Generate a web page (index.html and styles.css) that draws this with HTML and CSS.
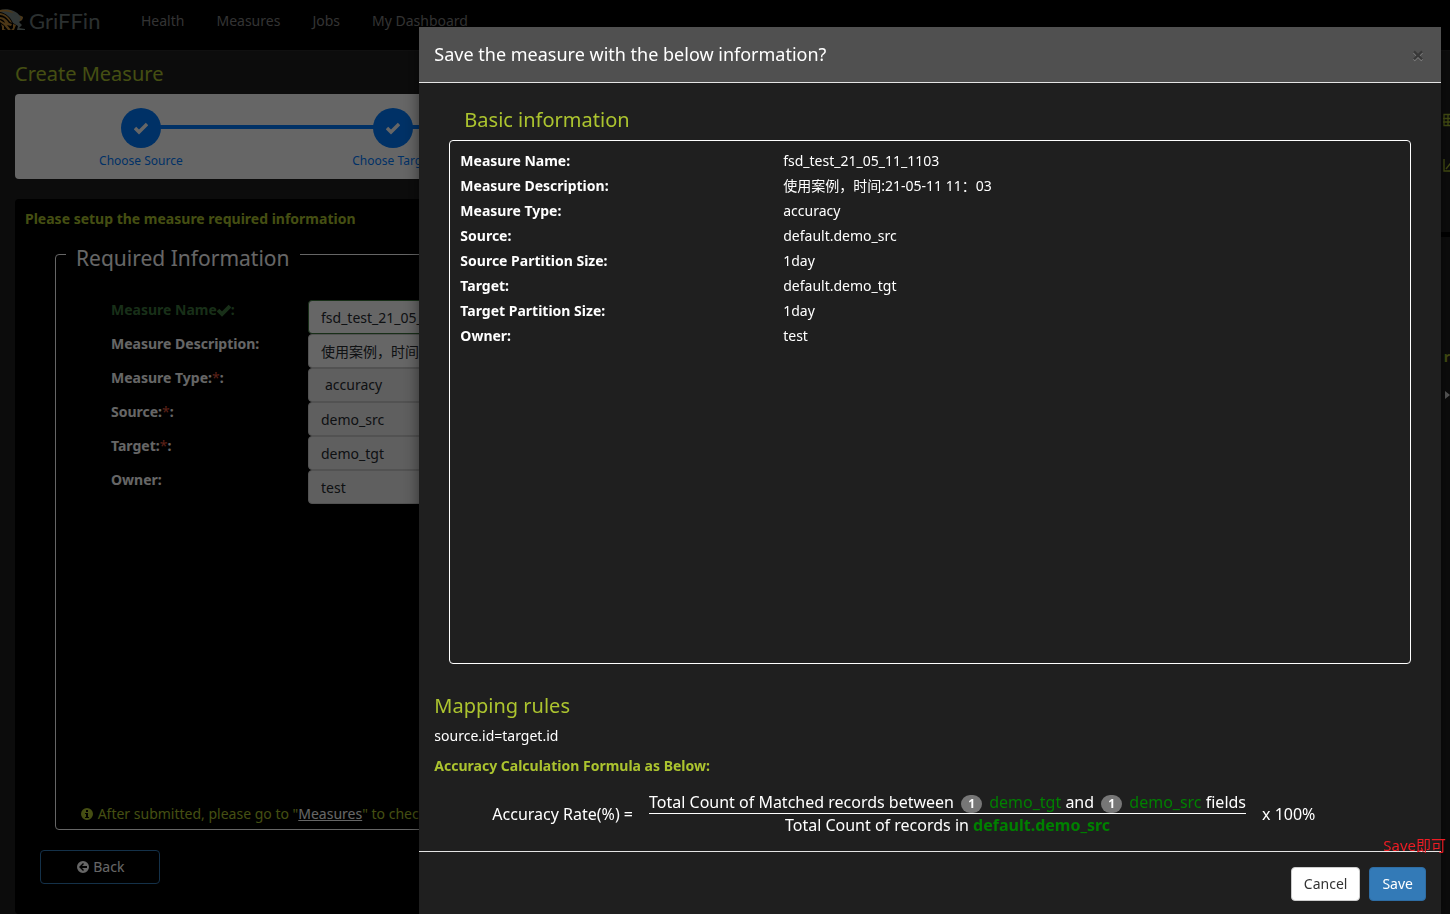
FILE: index.html
```html
<!DOCTYPE html>
<html lang="en">
<head>
<meta charset="utf-8">
<title>Griffin - Create Measure</title>
<link rel="stylesheet" href="styles.css">
</head>
<body>
<div class="page">
  <header class="navbar">
    <a class="brand" href="#">
      <svg class="brand-mark" viewBox="0 0 26 24" aria-hidden="true">
        <path d="M0 1 C7 -1 16 1 20 7 L23 8 L22 11 L19 13 L22 16 L19 19 L25 20 V21 H17 L18 17 L13 14 C11 9 6 4 0 3 Z" fill="#7c8988"/>
        <path d="M0 1 C6 0 11 1 14 4 C9 3 5 2 0 3 Z M0 4 C6 5 10 9 12 14 L10 13 C7 9 4 6 0 6 Z M0 8 C4 8 7 11 9 14 L12 15 L11 17 L7 16 L11 21 H8 L4 16 L0 13 V11 L5 14 C4 11 2 10 0 10 Z M1 15 L4 17 L4 20 L6 21 H2 L2 18 Z M13 15 L16 16 L14 21 H11 L13 19 Z M19 6 L23 8 L22 11 L19 12 L21 9 Z" fill="#c08a38"/>
      </svg>
      <span class="brand-name">GriFFin</span>
    </a>
    <nav class="nav">
      <a href="#">Health</a>
      <a href="#">Measures</a>
      <a href="#">Jobs</a>
      <a href="#">My Dashboard</a>
    </nav>
  </header>
  <div class="layout">
    <main class="main">
      <h1 class="page-title">Create Measure</h1>
      <ol class="steps">
        <li class="step">
          <span class="step-dot"><svg class="icon" viewBox="0 0 14 14"><path d="M1 7 L5 11 L13 3" fill="none" stroke="currentColor" stroke-width="3.400"/></svg></span>
          <span class="step-label">Choose Source</span>
        </li>
        <li class="step">
          <span class="step-dot"><svg class="icon" viewBox="0 0 14 14"><path d="M1 7 L5 11 L13 3" fill="none" stroke="currentColor" stroke-width="3.400"/></svg></span>
          <span class="step-label">Choose Target</span>
        </li>
      </ol>
      <form class="panel">
        <p class="panel-lead">Please setup the measure required information</p>
        <fieldset class="required">
          <legend>Required Information</legend>
          <div class="fields">
            <label class="valid" for="name">Measure Name<svg class="icon" viewBox="0 0 14 14"><path d="M1 7 L5 11 L13 3" fill="none" stroke="currentColor" stroke-width="3.800"/></svg>:</label>
            <input id="name" class="valid" type="text" value="fsd_test_21_05_11_1103">
            <label for="desc">Measure Description:</label>
            <input id="desc" type="text" value="使用案例，时间:21-05-11 11：03">
            <label for="type">Measure Type:<b class="star">*</b>:</label>
            <select id="type" disabled><option>accuracy</option></select>
            <label for="source">Source:<b class="star">*</b>:</label>
            <input id="source" type="text" value="demo_src" disabled>
            <label for="target">Target:<b class="star">*</b>:</label>
            <input id="target" type="text" value="demo_tgt" disabled>
            <label for="owner">Owner:</label>
            <input id="owner" type="text" value="test" disabled>
          </div>
          <p class="hint"><svg class="icon" viewBox="0 0 14 14"><path fill="currentColor" fill-rule="evenodd" d="M7 1a6 6 0 1 0 0 12A6 6 0 0 0 7 1ZM6 3h2v2H6ZM5 6h3v4h1v1H5v-1h1V7H5Z"/></svg> After submitted, please go to "<a href="#">Measures</a>" to check</p>
        </fieldset>
        <button class="back" type="button"><svg class="icon" viewBox="0 0 14 14"><path fill="currentColor" fill-rule="evenodd" d="M7 1a6 6 0 1 0 0 12A6 6 0 0 0 7 1ZM7 3l1 1-2 2h5v2H6l2 2-1 1-4-4Z"/></svg> Back</button>
      </form>
    </main>
    <aside class="side">
      <svg class="side-icon" viewBox="0 0 14 14"><path fill="none" stroke="currentColor" stroke-width="1.300" d="M1 1.500h12v11H1ZM0 5.500h14M0 9h14M5 1v12M9.500 1v12"/></svg>
      <svg class="side-icon chart" viewBox="0 0 14 14"><path fill="none" stroke="currentColor" stroke-width="1.400" d="M1 1v12h13M3 11l4-5 3 2 4-5"/></svg>
      <hr class="side-rule">
      <span class="side-text">r</span>
      <svg class="side-arrow" viewBox="0 0 8 10"><path d="M1 1v8l5-4Z"/></svg>
    </aside>
  </div>
</div>

<div class="overlay">
  <section class="modal" role="dialog" aria-labelledby="modal-title">
    <header class="modal-header">
      <h2 id="modal-title">Save the measure with the below information?</h2>
      <button class="close" type="button" aria-label="Close">×</button>
    </header>
    <div class="modal-body">
      <div class="basic">
        <h3>Basic information</h3>
        <dl class="info">
          <dt>Measure Name:</dt><dd>fsd_test_21_05_11_1103</dd>
          <dt>Measure Description:</dt><dd>使用案例，时间:21-05-11 11：03</dd>
          <dt>Measure Type:</dt><dd>accuracy</dd>
          <dt>Source:</dt><dd>default.demo_src</dd>
          <dt>Source Partition Size:</dt><dd>1day</dd>
          <dt>Target:</dt><dd>default.demo_tgt</dd>
          <dt>Target Partition Size:</dt><dd>1day</dd>
          <dt>Owner:</dt><dd>test</dd>
        </dl>
      </div>
      <h3>Mapping rules</h3>
      <p class="rule">source.id=target.id</p>
      <p class="formula-title">Accuracy Calculation Formula as Below:</p>
      <div class="formula">
        <span>Accuracy Rate(%) =</span>
        <div class="fraction">
          <div class="numerator">Total Count of Matched records between <span class="badge">1</span> <span class="field">demo_tgt</span> and <span class="badge">1</span> <span class="field">demo_src</span> fields</div>
          <div>Total Count of records in <b class="field">default.demo_src</b></div>
        </div>
        <span>x 100%</span>
      </div>
    </div>
    <footer class="modal-footer">
      <span class="note">Save即可</span>
      <button class="btn" type="button">Cancel</button>
      <button class="btn primary" type="button">Save</button>
    </footer>
  </section>
</div>
</body>
</html>
```
FILE: styles.css
```css
* { box-sizing: border-box; }
body {
  margin: 0;
  background: #1f1f1f;
  color: #fff;
  font: 14px/20px "Noto Sans", "Noto Sans CJK SC", sans-serif;
}
h1, h2, h3, p, ol, dl, dd { margin: 0; padding: 0; font-weight: 400; }
.page { height: 100vh; overflow: hidden; display: flex; flex-direction: column; }
.icon { width: 14px; height: 14px; vertical-align: -2px; }

.navbar {
  display: flex;
  align-items: flex-start;
  height: 51px;
  flex: none;
  background: #000;
  border-bottom: 1px solid #282828;
}
.brand { display: flex; align-items: center; width: 125px; padding-top: 9px; color: #6d7878; text-decoration: none; }
.brand-mark { width: 26px; height: 24px; }
.brand-name { font: 22px/24px Lato, sans-serif; margin-left: 3px; }
.nav { display: flex; padding-top: 11px; }
.nav a { padding: 0 16px; color: #808080; text-decoration: none; }

.layout { flex: 1; display: flex; padding-left: 15px; min-height: 0; }
.main { flex: none; width: 70.2%; display: flex; flex-direction: column; }
.page-title { font-size: 20px; line-height: 24px; color: #acc42f; padding: 11px 0 8px; }
.steps { display: flex; list-style: none; background: #fff; border-radius: 4px; height: 85px; padding-top: 14px; }
.step { position: relative; width: 25%; display: flex; flex-direction: column; align-items: center; color: #007bff; }
.step::before { content: ""; position: absolute; left: 50%; top: 17px; width: 100%; height: 4px; background: #007bff; }
.step-dot { position: relative; display: grid; place-items: center; width: 40px; height: 40px; border-radius: 50%; background: #007bff; color: #fff; }
.step-label { font-size: 12px; line-height: 16px; margin-top: 5px; }

.panel { flex: 1; margin-top: 20px; padding: 10px; background: #000; border-radius: 4px; }
.panel-lead { color: #acc42f; font-weight: 700; }
.required { display: flex; flex-direction: column; height: 592px; margin: 9px 30px 0; padding: 0 24px; border: 1px solid #fff; border-radius: 4px; }
.required legend { font-size: 21px; line-height: 24px; padding: 8px 10px 0; margin-left: -14px; }
.fields { display: grid; grid-template-columns: 197px 300px; padding: 30px 0 0 31px; }
.fields label { font-weight: 700; }
.fields label.valid { color: #3c763d; }
.star { color: #e0553c; font-weight: 400; }
.fields input, .fields select {
  appearance: none;
  width: 100%;
  height: 34px;
  padding: 6px 12px;
  border: 1px solid #ccc;
  border-radius: 4px;
  background: #fff;
  color: #272b30;
  font: inherit;
  opacity: 1;
}
.fields select { padding-left: 16px; }
.fields :disabled { background: #eee; }
.fields input.valid { border-color: #3c763d; }
.hint { margin-top: auto; padding-bottom: 5px; color: #acc42f; white-space: nowrap; }
.hint a { color: #fff; }
.back { width: 120px; height: 34px; margin: 20px 15px 0; border: 1px solid #337ab7; border-radius: 4px; background: #000; color: #fff; font: inherit; }

.side { flex: 1; display: flex; flex-direction: column; align-items: flex-end; padding-top: 62px; color: #acc42f; overflow: hidden; }
.side > * { flex: none; }
.side-icon { width: 14px; height: 14px; margin-right: -7px; }
.side-icon.chart { margin-top: 31px; }
.side-rule { width: 100%; height: 5px; margin: 60px 0 0; border: 0; background: #000; }
.side-text { font-weight: 700; margin-top: 110px; }
.side-arrow { width: 8px; height: 10px; margin: 23px -2px 0 0; fill: #ddd; }

.overlay { position: fixed; inset: 0; overflow: hidden; padding: 27px 9px 0 0; display: flex; justify-content: flex-end; background: rgba(0, 0, 0, .6); }
.modal { width: 70.9%; background: #1f1f1f; box-shadow: 0 5px 15px rgba(0, 0, 0, .5); display: flex; flex-direction: column; }
.modal-header { display: flex; justify-content: space-between; align-items: center; padding: 14px 15px 15px; background: #505050; border-bottom: 1px solid #e5e5e5; }
.modal-header h2 { font-size: 18px; line-height: 26px; }
.close { border: 0; padding: 0; width: 16px; background: none; color: #2f2f2f; font: 700 22px/24px "Noto Sans", sans-serif; text-shadow: 0 1px 0 #999; opacity: .7; }
.modal-body { flex: 1; padding: 25px 15px 0; }
.modal-body h3 { font-size: 20px; line-height: 24px; color: #acc42f; }
.basic { padding: 0 15px; margin-bottom: 30px; }
.basic h3 { padding-left: 15px; margin-bottom: 8px; }
.info { display: grid; grid-template-columns: 1fr 2fr; column-gap: 12px; align-content: start; grid-auto-rows: 25px; height: 524px; padding: 10px 5px 0 10px; border: 1px solid #fff; border-radius: 4px; }
.info dt { font-weight: 700; }
.rule { margin-top: 8px; }
.formula-title { margin-top: 10px; color: #acc42f; font-weight: 700; }
.formula { display: flex; align-items: center; gap: 16px; margin: 15px 58px 0; font-size: 16px; line-height: 22px; white-space: nowrap; }
.fraction { text-align: center; }
.numerator { border-bottom: 1px solid #fff; }
.badge { display: inline-block; min-width: 20px; margin: 0 3px; padding: 3px 7px; border-radius: 10px; background: #777; font-size: 12px; line-height: 12px; font-weight: 700; vertical-align: middle; }
.field { color: #008000; }
.modal-footer { position: relative; display: flex; justify-content: flex-end; gap: 9px; height: 63px; padding: 15px 15px 0; border-top: 1px solid #e5e5e5; }
.note { position: absolute; right: -5px; top: -17px; color: #ed1c24; font-size: 15px; }
.btn { height: 34px; padding: 0 12px; border: 1px solid #ccc; border-radius: 4px; background: #fff; color: #333; font: inherit; }
.btn.primary { border-color: #2e6da4; background: #337ab7; color: #fff; }
```
